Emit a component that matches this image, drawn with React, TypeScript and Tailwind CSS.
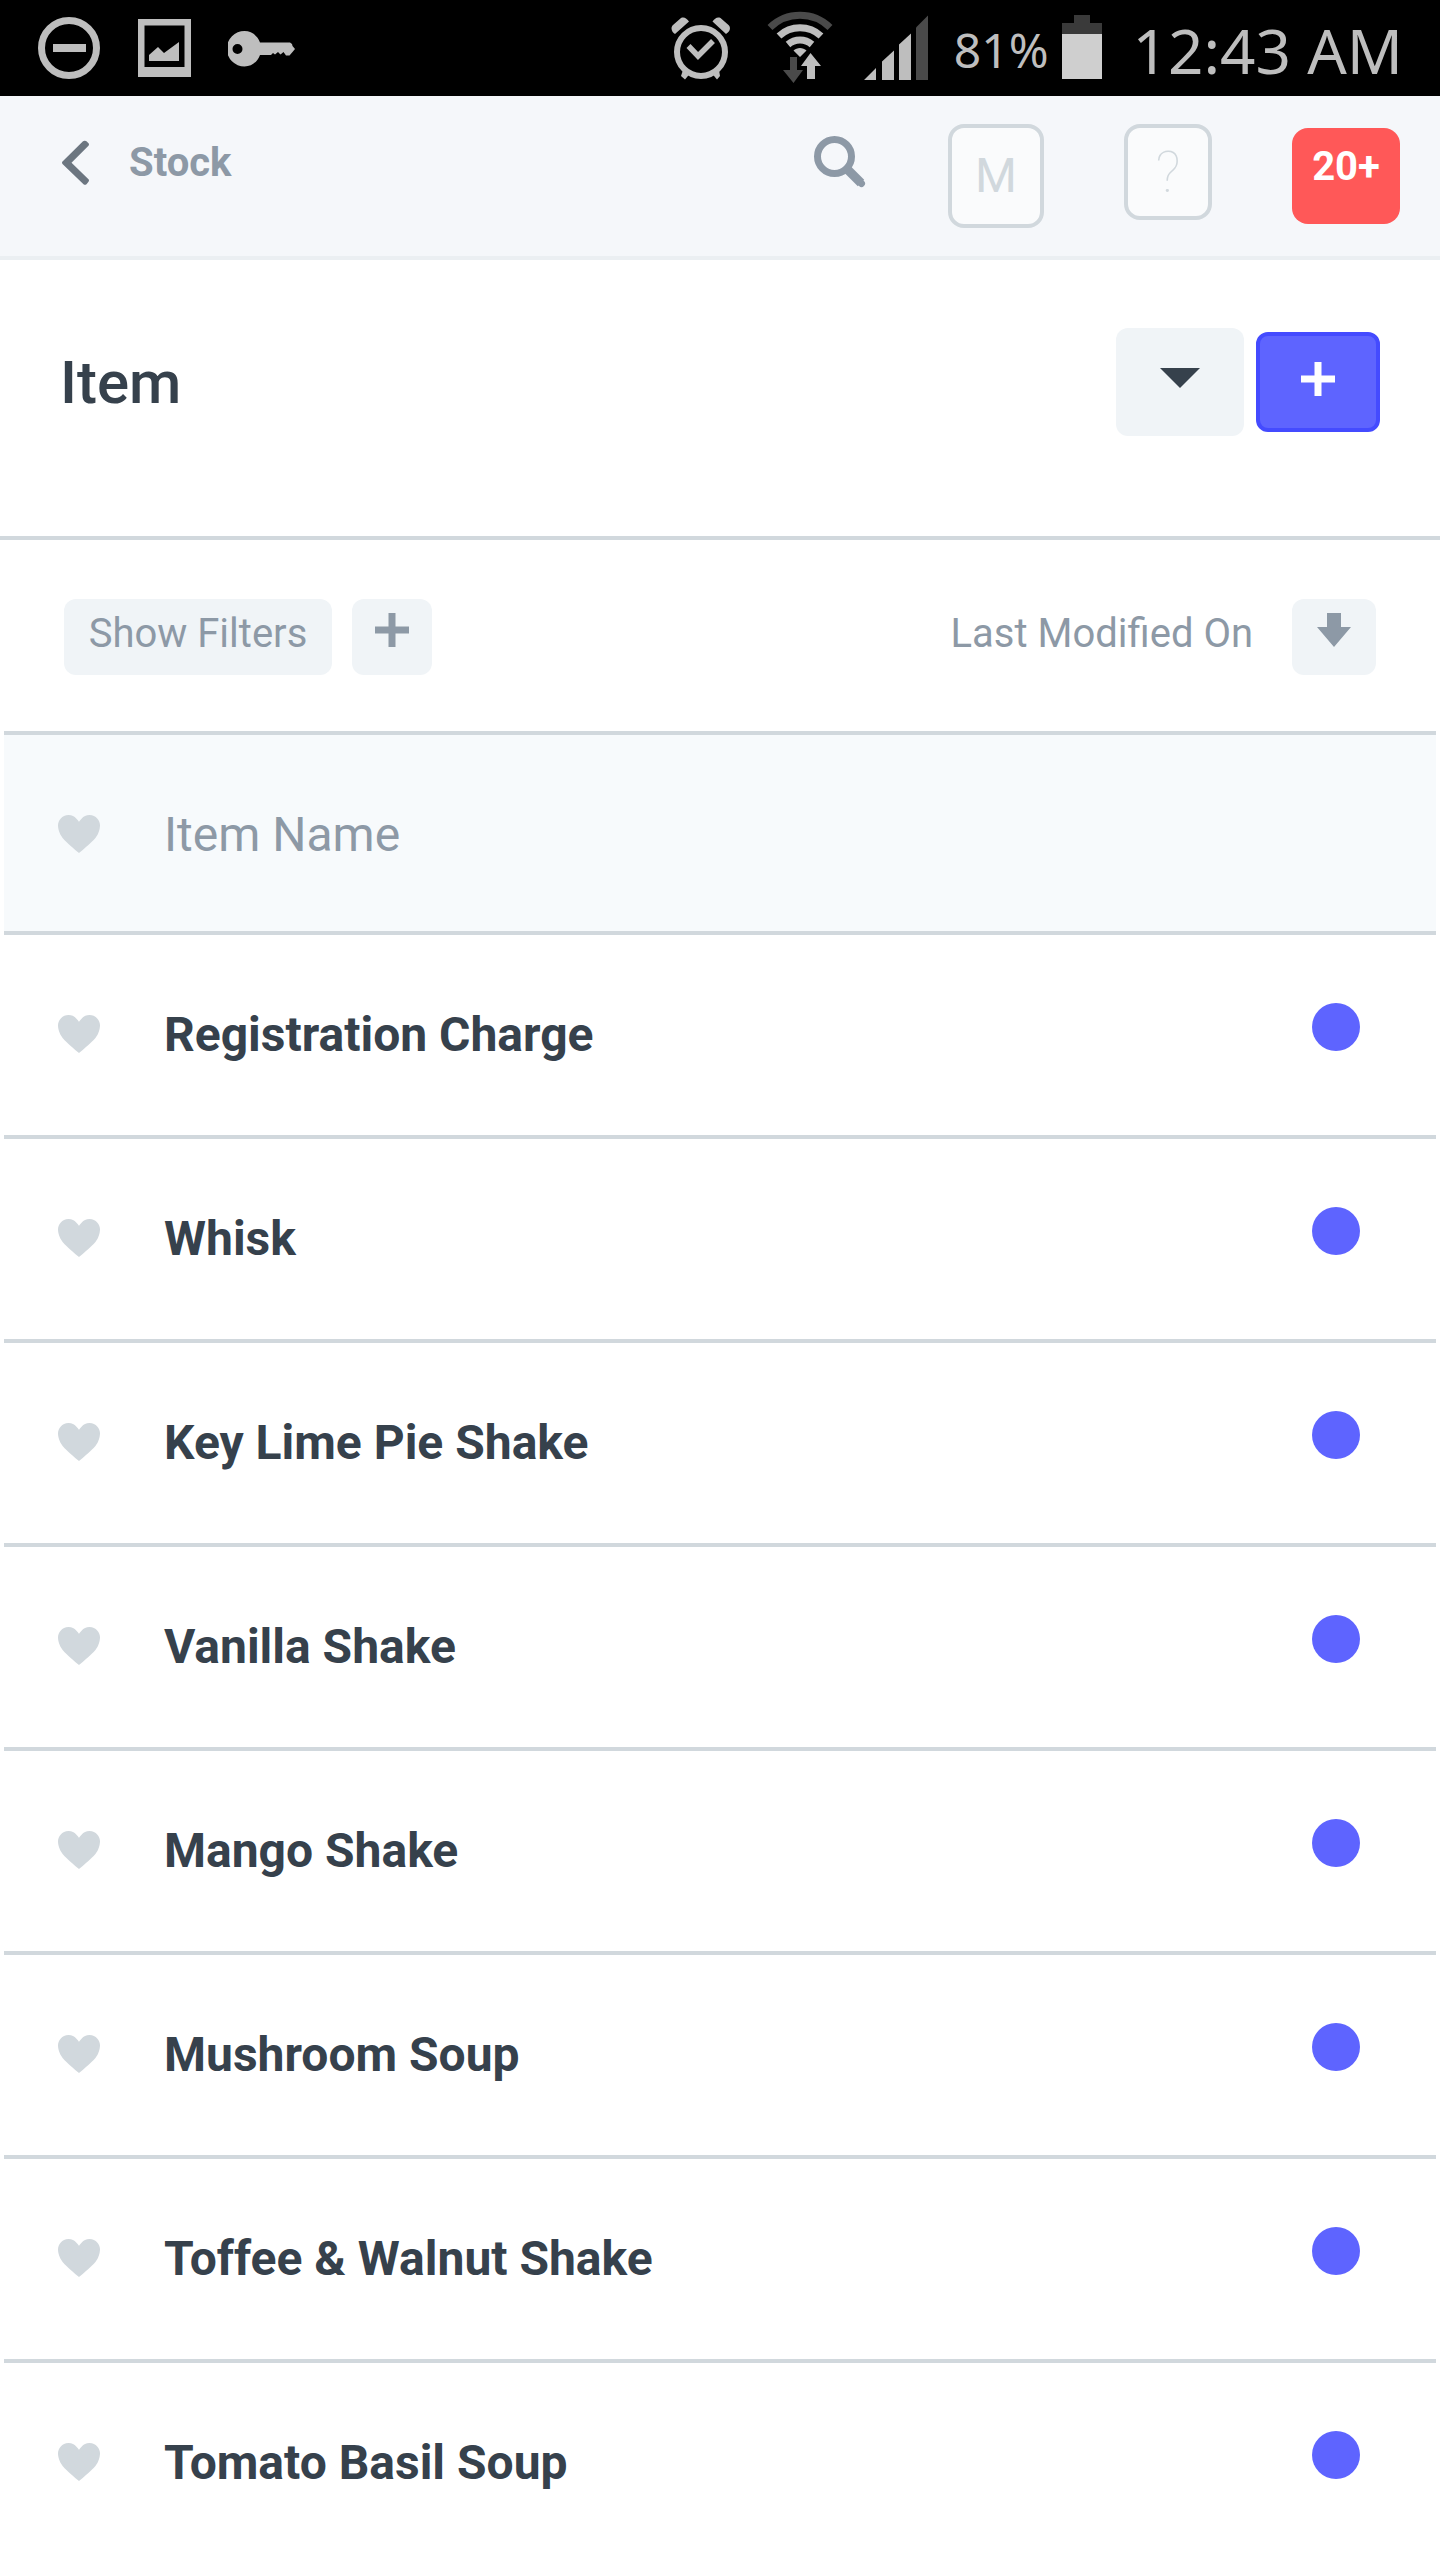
import type { ReactNode } from 'react';

const items = [
  'Registration Charge',
  'Whisk',
  'Key Lime Pie Shake',
  'Vanilla Shake',
  'Mango Shake',
  'Mushroom Soup',
  'Toffee & Walnut Shake',
  'Tomato Basil Soup',
];

const Heart = () => (
  <svg className="w-[42px] h-[38px]" viewBox="0 0 12 11" preserveAspectRatio="none" fill="#d1d8dd">
    <path d="M11.2 1C10.68.37 9.95.05 9 0c-.97 0-1.69.42-2.2 1-.51.58-.78.92-.8 1-.02-.08-.28-.42-.8-1C4.68.42 4.03 0 3 0 2.05.05 1.31.38.8 1 .28 1.61.02 2.28 0 3c0 .52.09 1.52.67 2.67C1.25 6.82 3.01 8.61 6 11c2.98-2.39 4.77-4.17 5.34-5.33C11.91 4.51 12 3.5 12 3c-.02-.72-.28-1.39-.8-2z" />
  </svg>
);

const Plus = () => (
  <svg className="w-[34px] h-[34px]" viewBox="0 0 34 34" fill="currentColor">
    <path d="M13.500 0h7v13.500H34v7H20.500V34h-7V20.500H0v-7h13.500z" />
  </svg>
);

const StatusBar = () => (
  <div className="flex justify-between h-24 bg-black pl-[38px] pr-[37px] font-['Noto_Sans',sans-serif] text-[#bebebe]">
    <div className="flex gap-[37px]">
      {/* do not disturb */}
      <svg className="w-[62px] h-24" viewBox="0 0 62 96" fill="none">
        <circle cx="31" cy="48" r="27.5" stroke="#bebebe" strokeWidth="7" />
        <path d="M15 44h33v8H15z" fill="#bebebe" />
      </svg>
      {/* picture */}
      <svg className="w-[54px] h-24" viewBox="0 0 54 96" fill="#bebebe">
        <path fillRule="evenodd" d="M1 19h53v58H1zM7.500 25.500v41.500h40v-41.500z" />
        <path d="M12 61v-6l9-8 6 6 15-11v19z" />
      </svg>
      {/* vpn key */}
      <svg className="w-[69px] h-24" viewBox="0 0 69 96" fill="#bebebe">
        <path
          fillRule="evenodd"
          d="M16.500 31c7 0 13 4.500 15.500 11.500h30l2 1.500.5 2 2.500 3-2.500 3-3 3.500h-3.500l-2.500-3.500-3 2.500-2.500-2.500-3 2.500-2-1.500-2 2H32c-2.500 7-8.500 11.500-15.500 11.500A17.500 17.500 0 0 1 16.500 31zM9.500 44a5 5 0 1 0 0 10 5 5 0 0 0 0-10z"
        />
      </svg>
    </div>

    <div className="flex">
      {/* alarm */}
      <svg className="w-[60px] h-24 mr-9" viewBox="0 0 60 96" fill="none">
        <circle cx="30" cy="52" r="24" stroke="#bebebe" strokeWidth="6" />
        <path d="M17.500 46l9.500 10 15-15" stroke="#bebebe" strokeWidth="5.5" />
        <path
          d="M4 34l14-12.500c-2-3-5-5-8-3.500L2 25c-3 3-1 7 2 9zM55 34L41.500 21.500c2-3 5-5 8-3.500l8 7c3 3 1 7-2.500 9zM12 70l-2 6 4 3.500 5-6zM48 70l1 6-3 3.500-5-6z"
          fill="#bebebe"
        />
      </svg>
      {/* wifi with traffic arrows */}
      <svg className="w-[66px] h-24 mr-[31px]" viewBox="0 0 66 96" fill="none" strokeWidth="7">
        <path d="M3 27.500a43 43 0 0 1 60 0" stroke="#4a4a4a" />
        <path d="M12 36a31 31 0 0 1 42 0M21 44.500a18.500 18.500 0 0 1 24 0" stroke="#bebebe" />
        <path d="M33 57l-6.500-6.500c3.500-3.500 9.500-3.500 13 0zM43.500 53L54 66h-6v13h-8V66h-6z" fill="#bebebe" strokeWidth="0" />
        <path d="M23 57h7v13h6L26.500 83 16 70h7z" fill="#4a4a4a" strokeWidth="0" />
      </svg>
      {/* signal strength */}
      <svg className="w-16 h-24 mr-[26px]" viewBox="0 0 64 96" fill="#bebebe">
        <path d="M0 80l12-12v12zM18 80V61.500l12-11V80zM35 80V44.500l12-11V80z" />
        <path d="M52 80V27.500l12-12V80z" fill="#4a4a4a" />
      </svg>
      <span className="text-[48px] leading-[100px]">81%</span>
      <svg className="w-10 h-24 ml-[13px] mr-[31px]" viewBox="0 0 40 96">
        <path d="M12 15h16v8h12v11H0V23h12z" fill="#3a3a3a" />
        <path d="M0 34h40v45H0z" fill="#cfcfcf" />
      </svg>
      <span className="text-[62px] leading-[100px] whitespace-nowrap">12:43 AM</span>
    </div>
  </div>
);

const NavBar = () => (
  <nav className="flex items-start justify-between h-[164px] bg-[#f5f7fa] border-b-4 border-[#ebeff2] pt-7 pl-[62px] pr-10">
    <a href="#stock" className="flex items-center gap-10 h-[76px] text-[40px] leading-[78px] font-bold text-[#8d99a6]">
      <svg className="w-[27px] h-[45px]" viewBox="0 0 27 45" fill="#6c7680">
        <path d="M22.500.8a2.500 2.500 0 0 1 2 .5l2 2a2 2 0 0 1 0 2.500L9.500 22.800l17 16.500a2 2 0 0 1 0 2.500l-2 2.500a2.500 2.500 0 0 1-3 0L.5 24a2 2 0 0 1 0-2.500L21 1.200z" />
      </svg>
      <span className="pt-0.5">Stock</span>
    </a>
    <div className="flex items-start">
      <button type="button" aria-label="Search" className="flex items-center h-[76px] mr-[82px]">
        <svg className="w-[52px] h-[52px]" viewBox="0 0 52 52" fill="none" stroke="#8d99a6">
          <circle cx="20.5" cy="20.5" r="17" strokeWidth="7" />
          <path d="M34 34l13 13" strokeWidth="9" />
          <path d="M44 44l3.500 3.500" strokeWidth="7" strokeLinecap="round" />
        </svg>
      </button>
      <button
        type="button"
        className="w-24 h-[104px] mr-20 rounded-2xl border-4 border-[#d1d8dd] bg-[#fafbfc] text-[48px] text-[#d1d8dd]"
      >
        M
      </button>
      <button
        type="button"
        aria-label="Help"
        className="w-[88px] h-24 mr-20 rounded-2xl border-4 border-[#d1d8dd] bg-[#fafbfc] text-[58px] leading-[80px] font-thin text-[#d1d8dd]"
      >
        ?
      </button>
      <button
        type="button"
        className="flex justify-center w-[108px] h-24 mt-1 rounded-2xl bg-[#ff5858] text-[40px] leading-[78px] font-bold text-white"
      >
        20+
      </button>
    </div>
  </nav>
);

const FilterButton = ({ label, className, children }: { label?: string; className: string; children: ReactNode }) => (
  <button
    type="button"
    aria-label={label}
    className={`flex justify-center h-[76px] rounded-xl bg-[#f0f4f7] text-[40px] leading-[70px] text-[#8d99a6] ${className}`}
  >
    {children}
  </button>
);

export default function App() {
  return (
    <div className="w-full min-h-screen bg-white font-[Roboto,sans-serif]">
      <StatusBar />
      <NavBar />

      {/* page title */}
      <header className="flex items-center justify-between h-[280px] border-b-4 border-[#d1d8dd] px-15 pb-8">
        <h1 className="pt-0.5 text-[60px] leading-[80px] font-medium text-[#36414c]">Item</h1>
        <div className="flex items-center gap-3">
          <button type="button" aria-label="Menu" className="flex justify-center w-32 h-[108px] pt-10 rounded-xl bg-[#f0f4f7]">
            <svg className="w-10 h-5" viewBox="0 0 40 20" fill="#36414c">
              <path d="M0 0h40L20 20z" />
            </svg>
          </button>
          <button
            type="button"
            aria-label="New"
            className="flex justify-center w-[124px] h-[100px] pt-[26px] rounded-xl border-4 border-[#444bff] bg-[#5e64ff] text-white"
          >
            <Plus />
          </button>
        </div>
      </header>

      {/* filters and sorting */}
      <div className="flex justify-between pt-[59px] pb-14 px-16">
        <div className="flex gap-5">
          <FilterButton className="w-[268px]">Show Filters</FilterButton>
          <FilterButton label="Add filter" className="w-20 pt-3.5">
            <Plus />
          </FilterButton>
        </div>
        <div className="flex gap-[39px]">
          <button type="button" className="h-[70px] text-[40px] leading-[70px] text-[#8d99a6]">
            Last Modified On
          </button>
          <FilterButton label="Sort descending" className="w-[84px] pt-3.5">
            <svg className="w-[34px] h-[34px]" viewBox="0 0 34 34" fill="currentColor">
              <path d="M10 0h14v14h10L17 34 0 14h10z" />
            </svg>
          </FilterButton>
        </div>
      </div>

      {/* item list */}
      <main className="mx-1 text-[48px] leading-14">
        <div className="flex h-[204px] pt-[72px] pl-[54px] border-y-4 border-[#d1d8dd] bg-[#f7fafc] text-[#8d99a6]">
          <div className="w-[106px] pt-2">
            <Heart />
          </div>
          <span>Item Name</span>
        </div>
        <ul>
          {items.map((name) => (
            <li
              key={name}
              className="flex items-start py-[72px] pl-[54px] pr-[76px] border-b-4 border-[#d1d8dd] last:border-b-0 last:pb-16"
            >
              <button type="button" aria-label={`Like ${name}`} className="w-[106px] pt-2">
                <Heart />
              </button>
              <a href="#item" className="flex-1 font-bold text-[#36414c]">
                {name}
              </a>
              <span className="w-12 h-12 -mt-1 rounded-full bg-[#5e64ff]" />
            </li>
          ))}
        </ul>
      </main>
    </div>
  );
}
